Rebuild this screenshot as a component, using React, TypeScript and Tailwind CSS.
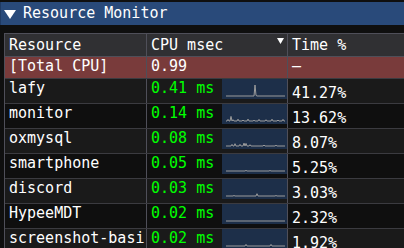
type Row = {
  name: string;
  ms: string;
  pct: string;
  plot: number[];
};

// sparkline samples, 0 = baseline, 1 = top of the plot
const flat = (n: number, spikes: Record<number, number> = {}) =>
  Array.from({ length: n }, (_, i) => spikes[i] ?? 0);

const rows: Row[] = [
  { name: 'lafy', ms: '0.41 ms', pct: '41.27%', plot: flat(60, { 29: 0.85, 30: 0.05 }) },
  {
    name: 'monitor',
    ms: '0.14 ms',
    pct: '13.62%',
    plot: flat(60, { 2: 0.12, 5: 0.35, 7: 0.1, 12: 0.14, 17: 0.08, 22: 0.15, 28: 0.06, 33: 0.12, 40: 0.1, 46: 0.14, 52: 0.08, 57: 0.12 }),
  },
  {
    name: 'oxmysql',
    ms: '0.08 ms',
    pct: '8.07%',
    plot: flat(60, { 6: 0.12, 9: 0.18, 14: 0.12, 18: 0.22, 20: 0.2, 24: 0.1, 38: 0.08, 50: 0.06 }),
  },
  { name: 'smartphone', ms: '0.05 ms', pct: '5.25%', plot: flat(60, { 20: 0.05, 44: 0.04 }) },
  { name: 'discord', ms: '0.03 ms', pct: '3.03%', plot: flat(60, { 8: 0.04, 31: 0.18, 50: 0.04 }) },
  { name: 'HypeeMDT', ms: '0.02 ms', pct: '2.32%', plot: flat(60) },
  { name: 'screenshot-basi', ms: '0.02 ms', pct: '1.92%', plot: flat(60, { 20: 0.12, 45: 0.12 }) },
];

const Sparkline = ({ values }: { values: number[] }) => {
  const pts = values
    .map((v, i) => {
      const x = 4 + (i * 59) / (values.length - 1);
      const y = 17 - v * 13;
      return `${x.toFixed(1)},${y.toFixed(1)}`;
    })
    .join(' ');
  return (
    <svg width="65" height="20" viewBox="0 0 65 20" className="block shrink-0 bg-[#1d2f49]">
      <polyline points={pts} fill="none" stroke="#9c9c9c" strokeWidth="1" />
    </svg>
  );
};

export default function App() {
  return (
    <div className="w-[404px] h-[248px] overflow-hidden bg-[#0f0f0f] pt-[2px] text-[15px] leading-[17px] text-white [font-family:'DejaVu_Sans_Mono',monospace]">
      <div className="h-[23px] bg-[#294a7a] border-l border-[#1f3a63] flex items-center">
        <svg width="12" height="9" viewBox="0 0 12 9" className="ml-[3px] mt-[1px]">
          <path d="M0 0h12L6 9z" fill="#fff" />
        </svg>
        <span className="ml-[7px]">Resource Monitor</span>
      </div>

      <div className="ml-[4px] mt-[8px] border-l border-t border-[#4f4f59]">
        <div className="grid grid-cols-[142px_141px_1fr] h-[23px] bg-[#303033] border-b border-[#4f4f59]">
          <div className="border-r border-[#4f4f59] pl-[4px] pt-[3px]">Resource</div>
          <div className="border-r border-[#4f4f59] pl-[4px] pt-[3px] relative">
            CPU msec
            <svg width="7" height="6" viewBox="0 0 7 6" className="absolute right-[3px] top-[4px]">
              <path d="M0 0h7L3.5 6z" fill="#fff" />
            </svg>
          </div>
          <div className="pl-[4px] pt-[3px]">Time %</div>
        </div>

        <div className="grid grid-cols-[142px_141px_1fr] h-[22px] bg-[#793b3b] border-b border-[#3b3b40]">
          <div className="border-r border-[#4f4f59] pl-[4px] pt-[1px]">[Total CPU]</div>
          <div className="border-r border-[#4f4f59] pl-[4px] pt-[1px]">0.99</div>
          <div className="pl-[4px] pt-[1px]">–</div>
        </div>

        {rows.map((r, i) => (
          <div
            key={r.name}
            className={`grid grid-cols-[142px_141px_1fr] h-[25px] border-b border-[#3b3b40] ${
              i % 2 === 0 ? 'bg-[#1a1a1a]' : 'bg-[#0f0f0f]'
            }`}
          >
            <div className="border-r border-[#4f4f59] pl-[4px] pt-[1px] overflow-hidden whitespace-nowrap">
              {r.name}
            </div>
            <div className="border-r border-[#4f4f59] pl-[4px] flex">
              <span className="text-[#00ff00] pt-[1px] whitespace-nowrap">{r.ms}</span>
              <div className="ml-auto">
                <Sparkline values={r.plot} />
              </div>
            </div>
            <div className="pl-[4px] pt-[6px]">{r.pct}</div>
          </div>
        ))}
      </div>
    </div>
  );
}
